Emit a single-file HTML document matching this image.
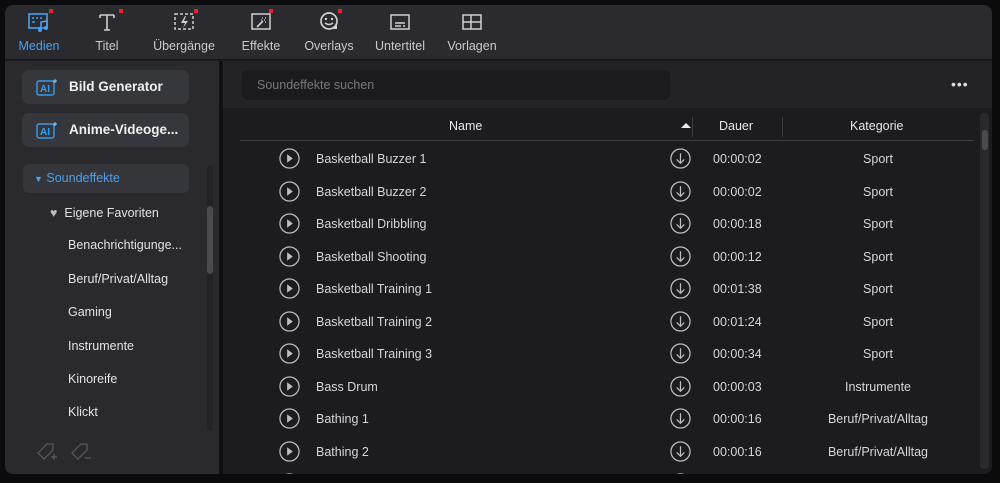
<!DOCTYPE html>
<html><head><meta charset="utf-8"><style>
*{margin:0;padding:0;box-sizing:border-box}
body{width:1000px;height:483px;background:#0b0b0d;font-family:"Liberation Sans",sans-serif;overflow:hidden;position:relative}
.win{position:absolute;left:5px;top:5px;width:987px;height:469px;background:#1c1c1f;border-radius:8px;overflow:hidden}
.top{position:absolute;left:0;top:0;width:987px;height:55px;background:#2a2a2f;border-bottom:1px solid #151517}
.tab{position:absolute;top:6px;text-align:center;font-size:12.5px;color:#c9c9cc}
.tab svg{display:block;margin:0 auto 6px}
.dot{position:absolute;width:4px;height:4px;background:#e0262a;top:4px}
.left{position:absolute;left:0;top:56px;width:214px;height:413px;background:#2a2a2e}
.div{position:absolute;left:214px;top:56px;width:4px;height:413px;background:#0f0f11}
.btn{position:absolute;left:17px;width:167px;height:34px;background:#36373c;border-radius:7px;color:#f0f0f2;font-weight:bold;font-size:13.5px;line-height:34px;padding-left:47px}
.btn svg{position:absolute;left:14px;top:8px}
.item{position:absolute;left:63px;font-size:12.5px;color:#e2e2e4}
.right{position:absolute;left:218px;top:56px;width:769px;height:413px;background:#1c1c1f}
.sbar{position:absolute;left:0;top:0;width:769px;height:47px;background:#232327}
.search{position:absolute;left:19px;top:9px;width:428px;height:30px;background:#1b1b1e;border-radius:6px;color:#77777c;font-size:12.5px;line-height:30px;padding-left:15px}
.hdr{position:absolute;top:58px;font-size:12.5px;color:#e8e8ea}
.row{position:absolute;left:0;width:769px;height:32px;font-size:12.5px;color:#d6d6d8}
.row span{position:absolute;top:9px}
</style></head><body>
<div class="win">
<div class="top">
 <div class="tab" style="left:12px;width:44px;color:#4aa0ee"><svg width="24" height="22" viewBox="0 0 24 22"><rect x="2" y="3" width="18" height="14" fill="none" stroke="#4aa0ee" stroke-width="1.6"/><path d="M5 7h2M9 7h2M13 7h2M5 11h3" stroke="#4aa0ee" stroke-width="1.4"/><path d="M14 19V11l6-1v7" stroke="#4aa0ee" stroke-width="1.6" fill="none"/><circle cx="13" cy="19" r="2" fill="#4aa0ee"/><circle cx="19" cy="17" r="2" fill="#4aa0ee"/></svg>Medien</div>
 <div class="dot" style="left:44px"></div>
 <div class="tab" style="left:86px;width:32px"><svg width="22" height="22" viewBox="0 0 22 22"><path d="M4 4h14M11 4v15M4 4v3M18 4v3M8 19h6" stroke="#d0d0d3" stroke-width="1.6" fill="none"/></svg>Titel</div>
 <div class="dot" style="left:114px"></div>
 <div class="tab" style="left:147px;width:64px"><svg width="24" height="22" viewBox="0 0 24 22"><rect x="3" y="3" width="18" height="15" fill="none" stroke="#d0d0d3" stroke-width="1.5" stroke-dasharray="3 2"/><path d="M13 5l-4 7h4l-2 5 5-7h-4l2-5z" fill="#d0d0d3"/></svg>Übergänge</div>
 <div class="dot" style="left:189px"></div>
 <div class="tab" style="left:234px;width:44px"><svg width="24" height="22" viewBox="0 0 24 22"><rect x="3" y="3" width="18" height="15" fill="none" stroke="#d0d0d3" stroke-width="1.5"/><path d="M8 16l6-6" stroke="#d0d0d3" stroke-width="1.6"/><path d="M13 7h1M16 7h1M15 9h1M12 9h1M16 11h1" stroke="#d0d0d3" stroke-width="1.2"/></svg>Effekte</div>
 <div class="dot" style="left:264px"></div>
 <div class="tab" style="left:298px;width:52px"><svg width="24" height="22" viewBox="0 0 24 22"><circle cx="12" cy="10" r="8" fill="none" stroke="#d0d0d3" stroke-width="1.7"/><circle cx="9" cy="8" r="1.2" fill="#d0d0d3"/><circle cx="15" cy="8" r="1.2" fill="#d0d0d3"/><path d="M8 12q4 3 8 0" stroke="#d0d0d3" stroke-width="1.5" fill="none"/><path d="M14 18l6-5v5z" fill="#d0d0d3"/></svg>Overlays</div>
 <div class="dot" style="left:333px"></div>
 <div class="tab" style="left:368px;width:54px"><svg width="24" height="22" viewBox="0 0 24 22"><rect x="3" y="4" width="18" height="14" fill="none" stroke="#d0d0d3" stroke-width="1.5"/><path d="M7 12h10M7 15h6M15 15h2" stroke="#d0d0d3" stroke-width="1.4"/></svg>Untertitel</div>
 <div class="tab" style="left:441px;width:52px"><svg width="24" height="22" viewBox="0 0 24 22"><rect x="3" y="4" width="18" height="14" fill="none" stroke="#d0d0d3" stroke-width="1.5"/><path d="M3 11h18M11 4v14" stroke="#d0d0d3" stroke-width="1.5"/></svg>Vorlagen</div>
</div>
<div class="left">
 <div class="btn" style="top:9px"><svg width="22" height="19" viewBox="0 0 22 19"><rect x="1" y="3" width="17" height="14" rx="2" fill="none" stroke="#3a9be8" stroke-width="1.4"/><text x="4" y="14" font-size="10" font-weight="bold" fill="#3a9be8" font-family="Liberation Sans">AI</text><path d="M19 1v4M17 3h4" stroke="#8cd0ff" stroke-width="1"/></svg>Bild Generator</div>
 <div class="btn" style="top:52px"><svg width="22" height="19" viewBox="0 0 22 19"><rect x="1" y="3" width="17" height="14" rx="2" fill="none" stroke="#3a9be8" stroke-width="1.4"/><text x="4" y="14" font-size="10" font-weight="bold" fill="#3a9be8" font-family="Liberation Sans">AI</text><path d="M19 1v4M17 3h4" stroke="#8cd0ff" stroke-width="1"/></svg>Anime-Videoge...</div>
 <div style="position:absolute;left:18px;top:103px;width:166px;height:29px;background:#35363b;border-radius:6px;color:#4aa0ee;font-size:12.5px;line-height:29px;padding-left:11px"><span style="font-size:9px">▼</span> Soundeffekte</div>
 <div class="item" style="left:45px;top:145px"><span style="color:#bbb">♥</span>&nbsp; Eigene Favoriten</div>
 <div class="item" style="top:177px">Benachrichtigunge...</div>
 <div class="item" style="top:211px">Beruf/Privat/Alltag</div>
 <div class="item" style="top:244px">Gaming</div>
 <div class="item" style="top:278px">Instrumente</div>
 <div class="item" style="top:311px">Kinoreife</div>
 <div class="item" style="top:344px">Klickt</div>
 <div style="position:absolute;left:202px;top:104px;width:6px;height:266px;background:#232326;border-radius:3px"></div>
 <div style="position:absolute;left:202px;top:145px;width:6px;height:68px;background:#4a4a4f;border-radius:3px"></div>
 <svg style="position:absolute;left:30px;top:380px" width="60" height="22" viewBox="0 0 60 22"><path d="M3 12l9-9h6v6l-9 9z" fill="none" stroke="#5a5a5f" stroke-width="1.2"/><path d="M19 13v6M16 16h6" stroke="#5a5a5f" stroke-width="1.2"/><path d="M37 12l9-9h6v6l-9 9z" fill="none" stroke="#5a5a5f" stroke-width="1.2"/><path d="M50 17h6" stroke="#5a5a5f" stroke-width="1.2"/></svg>
</div>
<div class="div"></div>
<div style="position:absolute;left:218px;top:263px;width:15px;height:31px;background:#3a3b40;border-radius:2px;color:#4aa0ee;font-size:13px;text-align:center;line-height:31px">‹</div>
<div class="right" style="left:218px">
 <div class="sbar"><div class="search">Soundeffekte suchen</div><div style="position:absolute;left:728px;top:15px;color:#ddd;font-size:14px;letter-spacing:1px">•••</div></div>
 <div class="hdr" style="left:226px">Name</div>
 <div style="position:absolute;left:458px;top:62px;width:0;height:0;border-left:5px solid transparent;border-right:5px solid transparent;border-bottom:5px solid #eee"></div>
 <div style="position:absolute;left:469px;top:56px;width:1px;height:20px;background:#3a3a3e"></div>
 <div class="hdr" style="left:496px">Dauer</div>
 <div style="position:absolute;left:559px;top:56px;width:1px;height:20px;background:#3a3a3e"></div>
 <div class="hdr" style="left:627px">Kategorie</div>
 <div style="position:absolute;left:17px;top:79px;width:734px;height:1px;background:#3e3e42"></div>
 <div style="position:absolute;left:757px;top:52px;width:9px;height:356px;background:#2a2a2e;border-radius:4px"></div>
 <div style="position:absolute;left:759px;top:69px;width:6px;height:20px;background:#4a4a4f;border-radius:3px"></div>
 <div id="rows"></div>
</div>
</div>
<script>
var d=[["Basketball Buzzer 1","00:00:02","Sport"],["Basketball Buzzer 2","00:00:02","Sport"],["Basketball Dribbling","00:00:18","Sport"],["Basketball Shooting","00:00:12","Sport"],["Basketball Training 1","00:01:38","Sport"],["Basketball Training 2","00:01:24","Sport"],["Basketball Training 3","00:00:34","Sport"],["Bass Drum","00:00:03","Instrumente"],["Bathing 1","00:00:16","Beruf/Privat/Alltag"],["Bathing 2","00:00:16","Beruf/Privat/Alltag"],["","",""]];
var h="";
d.forEach(function(r,i){var t=82+i*32.5;
h+='<div class="row" style="top:'+t+'px"><svg style="position:absolute;left:56px;top:5px" width="21" height="21" viewBox="0 0 22 22"><circle cx="11" cy="11" r="10" fill="none" stroke="#bdbdc0" stroke-width="1.3"/><path d="M8.5 6.5l6 4.5-6 4.5z" fill="#bdbdc0"/></svg><span style="left:93px">'+r[0]+'</span><svg style="position:absolute;left:447px;top:5px" width="21" height="21" viewBox="0 0 22 22"><circle cx="11" cy="11" r="10" fill="none" stroke="#bdbdc0" stroke-width="1.3"/><path d="M11 5.5v10M7 12l4 4 4-4" fill="none" stroke="#bdbdc0" stroke-width="1.3"/></svg><span style="left:490px">'+r[1]+'</span><span style="left:555px;width:200px;text-align:center">'+r[2]+'</span></div>';});
document.getElementById("rows").innerHTML=h;
</script>
</body></html>
